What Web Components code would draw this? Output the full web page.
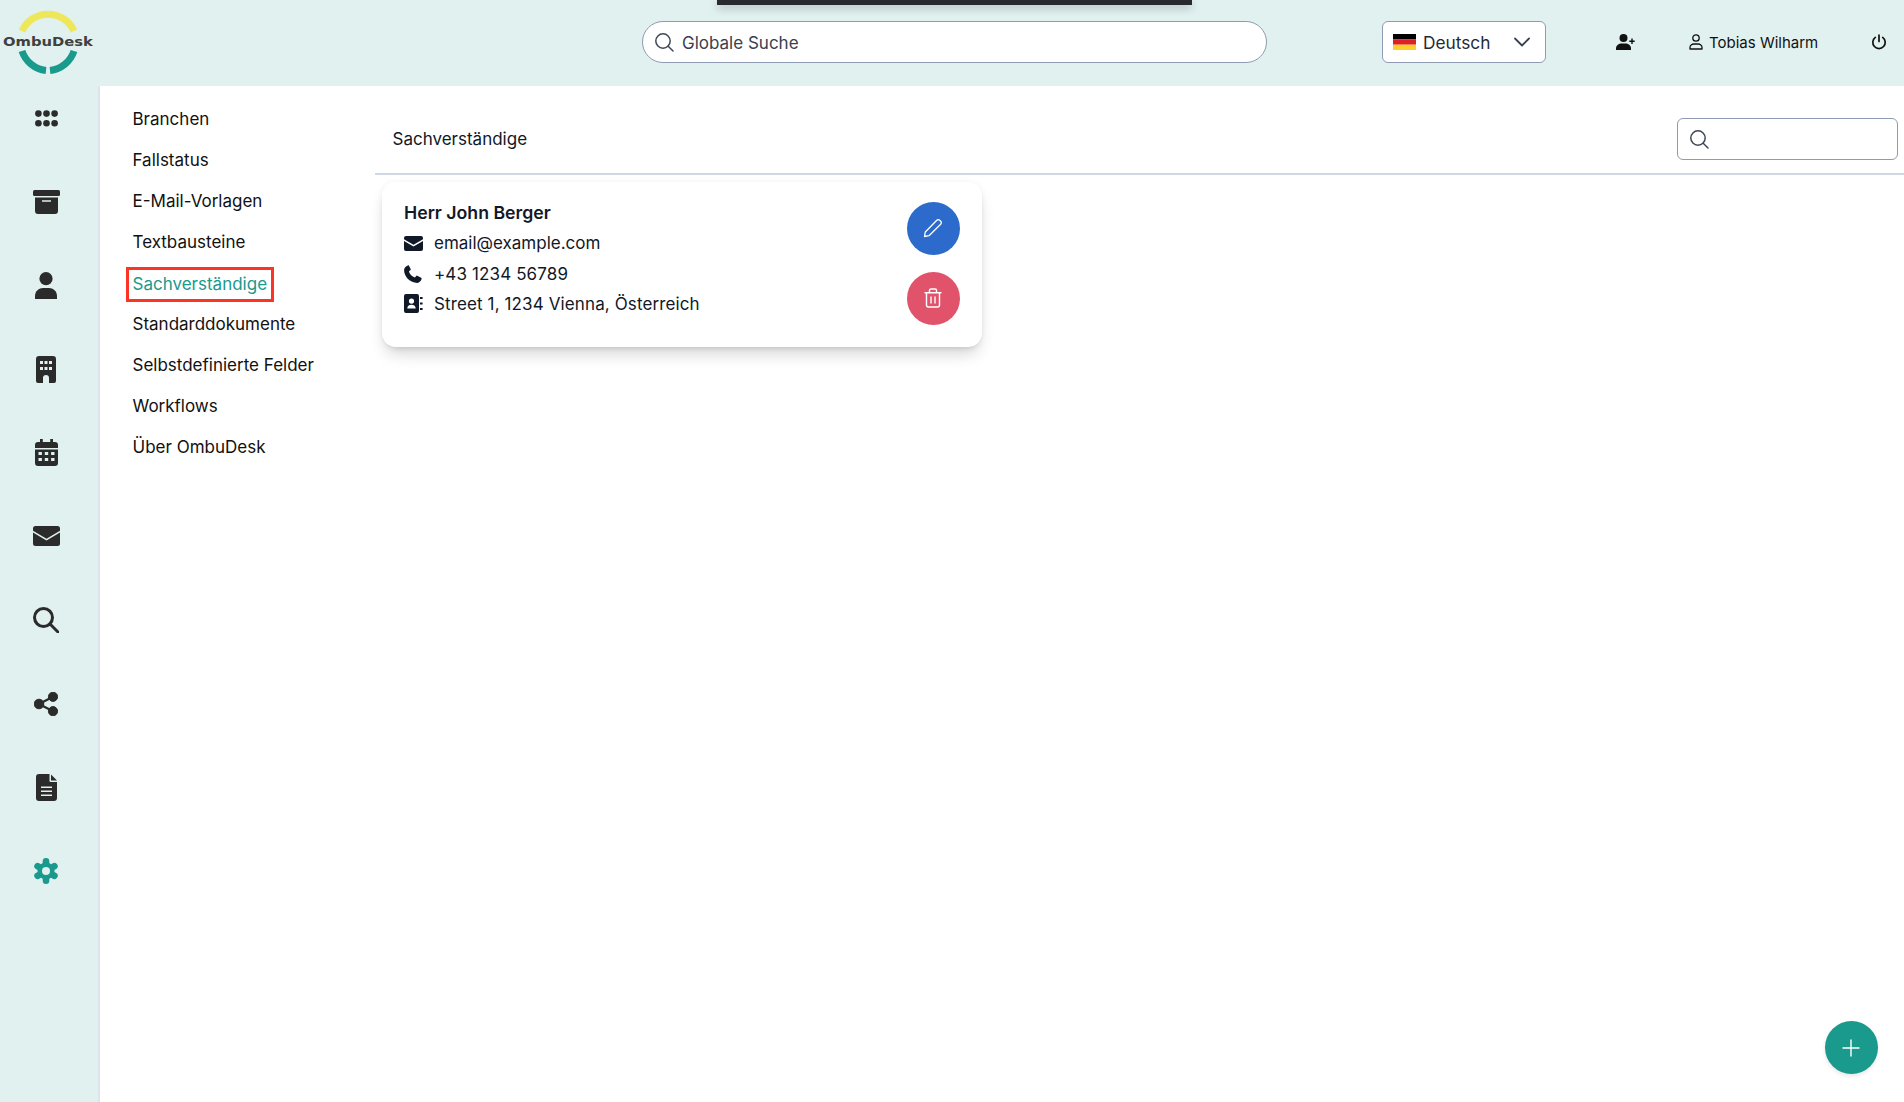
<!DOCTYPE html>
<html lang="de">
<head>
<meta charset="utf-8">
<title>OmbuDesk</title>
<style>
    html, body { margin: 0; padding: 0; background: #fff; }
    body { font-family: Inter, "Liberation Sans", sans-serif; font-size: 17px; color: #111827; }
</style>
</head>
<body>
<om-app></om-app>
<script>
// Alle Symbole an einem Ort, damit die Komponenten sie nur per Namen holen
const ICONS = {
    grid: `<svg viewBox="0 0 23 17" width="23" height="17" fill="currentColor"><circle cx="3.4" cy="3.6" r="3.3"/><circle cx="11.5" cy="3.6" r="3.3"/><circle cx="19.6" cy="3.6" r="3.3"/><circle cx="3.4" cy="13.2" r="3.3"/><circle cx="11.5" cy="13.2" r="3.3"/><circle cx="19.6" cy="13.2" r="3.3"/></svg>`,
    archive: `<svg viewBox="0 0 27 24" width="27" height="24" fill="currentColor"><rect x="0" y="0" width="27" height="6" rx="1.5"/><path fill-rule="evenodd" d="M2 7.5h23V21a3 3 0 0 1-3 3H5a3 3 0 0 1-3-3zM9 10.3v1.4h9v-1.4z"/></svg>`,
    person: `<svg viewBox="0 0 24 27" width="24" height="27" fill="currentColor"><circle cx="12" cy="6.7" r="6.6"/><path d="M1 27v-3c0-5 4-8 8-8h6c4 0 8 3 8 8v3z"/></svg>`,
    building: `<svg viewBox="0 0 20 27" width="20" height="27" fill="currentColor"><path fill-rule="evenodd" d="M3 0h14a3 3 0 0 1 3 3v22a2 2 0 0 1-2 2h-5v-5a3 3 0 0 0-6 0v5H2a2 2 0 0 1-2-2V3a3 3 0 0 1 3-3zM4 5v3h3V5zM8.5 5v3h3V5zM13 5v3h3V5zM4 11v3h3v-3zM8.5 11v3h3v-3zM13 11v3h3v-3z"/></svg>`,
    calendar: `<svg viewBox="0 0 23 27" width="23" height="27" fill="currentColor"><path d="M5 0.5a1.4 1.4 0 0 1 2.8 0V3h7.4V0.5a1.4 1.4 0 0 1 2.8 0V3h2a3 3 0 0 1 3 3v3H0V6a3 3 0 0 1 3-3h2z"/><path fill-rule="evenodd" d="M0 10.5h23V24a3 3 0 0 1-3 3H3a3 3 0 0 1-3-3zM3.5 13v3h3.4v-3zM9.8 13v3h3.4v-3zM16.1 13v3h3.4v-3zM3.5 19v3h3.4v-3zM9.8 19v3h3.4v-3zM16.1 19v3h3.4v-3z"/></svg>`,
    mail: `<svg viewBox="0 0 27 20" width="27" height="20" fill="currentColor"><path d="M2.5 0h22A2.5 2.5 0 0 1 27 2.5v2.3L13.5 12.8 0 4.8V2.5A2.5 2.5 0 0 1 2.5 0z"/><path d="M0 6.5l13.5 8 13.5-8V17.5a2.5 2.5 0 0 1-2.5 2.5h-22A2.5 2.5 0 0 1 0 17.5z"/></svg>`,
    search: `<svg viewBox="0 0 26 26" width="26" height="26" fill="none" stroke="currentColor" stroke-width="3"><circle cx="10.5" cy="10.5" r="9"/><path d="M17 17l8 8" stroke-linecap="round"/></svg>`,
    share: `<svg viewBox="0 0 24 24" width="24" height="24" fill="currentColor" stroke="currentColor"><circle cx="5" cy="12" r="4.8"/><circle cx="19" cy="4.8" r="4.6"/><circle cx="19" cy="19.2" r="4.6"/><path d="M5 12L19 4.8M5 12l14 7.2" stroke-width="2.4" fill="none"/></svg>`,
    doc: `<svg viewBox="0 0 21 27" width="21" height="27" fill="currentColor"><path fill-rule="evenodd" d="M3 0h10.500v7a1 1 0 0 0 1 1H21v16a3 3 0 0 1-3 3H3a3 3 0 0 1-3-3V3a3 3 0 0 1 3-3zM5 12.500v1.500h11v-1.500zM5 16.500v1.500h11v-1.500zM5 20.500v1.500h11v-1.500z"/><path d="M15 0.500l6 6h-6z"/></svg>`,
    gear: `<svg viewBox="0 0 26 26" width="26" height="26" fill="currentColor"><rect x="9.700" y="0" width="6.600" height="26" rx="3.200"/><rect x="9.700" y="0" width="6.600" height="26" rx="3.200" transform="rotate(60 13 13)"/><rect x="9.700" y="0" width="6.600" height="26" rx="3.200" transform="rotate(120 13 13)"/></svg>`,
    loupe: `<svg viewBox="0 0 20 20" width="20" height="20" fill="none" stroke="currentColor" stroke-width="1.500" stroke-linecap="round"><circle cx="9" cy="9" r="7.200"/><path d="M14.200 14.200L19 19"/></svg>`,
    chevron: `<svg viewBox="0 0 18 10" width="18" height="10" fill="none" stroke="currentColor" stroke-width="1.800" stroke-linecap="round" stroke-linejoin="round"><path d="M2 1.500l7 7 7-7"/></svg>`,
    flag: `<svg viewBox="0 0 23 16" width="23" height="16"><rect width="23" height="5.400" fill="#000"/><rect y="5.400" width="23" height="5.300" fill="#dd1f26"/><rect y="10.700" width="23" height="5.300" fill="#ffce2b"/></svg>`,
    userPlus: `<svg viewBox="0 0 20 16" width="20" height="16" fill="currentColor"><circle cx="7.500" cy="4" r="4"/><path d="M0 16v-1.500C0 11 3 9.500 5.500 9.500h4c2.500 0 5.500 1.500 5.500 5V16z"/><path d="M15.300 4.500h1.400v2h2v1.400h-2v2h-1.400v-2h-2V6.500h2z"/></svg>`,
    userLine: `<svg viewBox="0 0 14 16" width="14" height="16" fill="none" stroke="currentColor" stroke-width="1.300"><circle cx="7" cy="4" r="3.200"/><path d="M1 15v-1.500C1 11.500 2.800 10 5 10h4c2.200 0 4 1.500 4 3.500V15z" stroke-linejoin="round"/></svg>`,
    power: `<svg viewBox="0 0 16 16" width="16" height="16" fill="none" stroke="currentColor" stroke-width="1.700" stroke-linecap="round"><path d="M8 1v6.500"/><path d="M4.300 3.400a6.200 6.200 0 1 0 7.400 0"/></svg>`,
    envelope: `<svg viewBox="0 0 19 15" width="19" height="15" fill="currentColor"><path d="M2 0h15a2 2 0 0 1 2 2v1.200L9.500 8.800 0 3.200V2a2 2 0 0 1 2-2z"/><path d="M0 5l9.500 5.600L19 5v8a2 2 0 0 1-2 2H2a2 2 0 0 1-2-2z"/></svg>`,
    phone: `<svg viewBox="0 0 18 18" width="18" height="18" fill="currentColor"><path d="M4.700.300l2.200 4.300-2 2c.9 2.700 3.200 5 5.900 5.900l2-2 4.300 2.200c.5.300.7.900.5 1.400-.6 2-2.200 3.700-4.200 3.800C6.300 18 0 11.600.1 5c.1-2 1.700-3.700 3.700-4.500.3-.2.700-.300.900-.200z"/></svg>`,
    contacts: `<svg viewBox="0 0 19 19" width="19" height="19" fill="currentColor"><path fill-rule="evenodd" d="M2 0h11a2 2 0 0 1 2 2v15a2 2 0 0 1-2 2H2a2 2 0 0 1-2-2V2a2 2 0 0 1 2-2zM7.500 4.500a2.600 2.600 0 1 0 0 5.200 2.600 2.600 0 0 0 0-5.200zM3.300 14.500h8.400c0-2.500-1.500-3.800-4.200-3.800s-4.200 1.300-4.200 3.800z"/><path d="M16 3h2.600v2H16zM16 8.500h2.600v2H16zM16 14h2.600v2H16z"/></svg>`,
    pencil: `<svg viewBox="0 0 20 20" width="20" height="20" fill="none" stroke="currentColor" stroke-width="1.300" stroke-linejoin="round"><path d="M1.500 18.500l.8-4.500L13.800 2.300a2 2 0 0 1 2.900 0l1 1a2 2 0 0 1 0 2.900L6 17.700z"/></svg>`,
    trash: `<svg viewBox="0 0 18 20" width="18" height="20" fill="none" stroke="currentColor" stroke-width="1.400" stroke-linecap="round" stroke-linejoin="round"><path d="M1 4.800h16M5.500 4.500V2.300A1.300 1.300 0 0 1 6.800 1h4.400a1.300 1.300 0 0 1 1.300 1.300v2.200M2.500 5v12a2 2 0 0 0 2 2h9a2 2 0 0 0 2-2V5M7 9v6M11 9v6"/></svg>`,
    plus: `<svg viewBox="0 0 18 18" width="18" height="18" fill="none" stroke="currentColor" stroke-width="1.400" stroke-linecap="round"><path d="M9 1v16M1 9h16"/></svg>`
};

class OmLogo extends HTMLElement {
    connectedCallback() {
        this.attachShadow({mode: 'open'}).innerHTML = `
            <style>
                :host { display: block; position: relative; width: 96px; height: 86px; }
                svg { position: absolute; left: 16px; top: 10px; }
                span {
                    position: absolute; left: 3px; top: 33px;
                    font: 700 12.500px/17px "DejaVu Sans", sans-serif;
                    color: #404040; white-space: nowrap;
                    transform: scaleX(1.180); transform-origin: left center;
                }
            </style>
            <svg width="64" height="64" viewBox="0 0 64 64" fill="none" stroke-width="7">
                <path d="M6 21A28.500 28.500 0 0 1 58 21" stroke="#eee75a"/>
                <path d="M6 41A28.500 28.500 0 0 0 30 60.500" stroke="#1a998d"/>
                <path d="M34 60.500A28.500 28.500 0 0 0 58 41" stroke="#1a998d"/>
            </svg>
            <span>OmbuDesk</span>`;
    }
}
customElements.define('om-logo', OmLogo);

class OmLanguage extends HTMLElement {
    connectedCallback() {
        this.attachShadow({mode: 'open'}).innerHTML = `
            <style>
                :host {
                    display: flex; align-items: center; box-sizing: border-box;
                    width: 164px; height: 42px; padding: 0 14px 0 10px;
                    background: #fff; border: 1px solid #8f9bb3; border-radius: 6px;
                    color: #1f2937; font-size: 17.300px;
                }
                .t { margin-left: 7px; flex: 1; }
                .c { color: #374151; display: flex; }
                .f { display: flex; }
            </style>
            <span class="f">${ICONS.flag}</span><span class="t"><slot></slot></span><span class="c">${ICONS.chevron}</span>`;
    }
}
customElements.define('om-language', OmLanguage);

class OmSearch extends HTMLElement {
    connectedCallback() {
        this.attachShadow({mode: 'open'}).innerHTML = `
            <style>
                :host {
                    display: flex; align-items: center; gap: 8px; box-sizing: border-box;
                    background: #fff; border: 1px solid #8f9bb3;
                    padding: 0 12px 0 11px; color: #374151; font-size: 17px;
                }
                .i { display: flex; color: #3f4757; }
                .t { padding-top: 2px; }
            </style>
            <span class="i">${ICONS.loupe}</span><span class="t"><slot></slot></span>`;
    }
}
customElements.define('om-search', OmSearch);

class OmHeader extends HTMLElement {
    connectedCallback() {
        this.attachShadow({mode: 'open'}).innerHTML = `
            <style>
                :host {
                    display: flex; align-items: center; position: relative; box-sizing: border-box;
                    height: 86px; padding-bottom: 2px; background: #e0f1ef; color: #111;
                }
                om-logo { margin-bottom: -2px; }
                om-search { width: 625px; height: 42px; margin-left: 546px; border-radius: 21px; }
                om-language { margin-left: 115px; }
                .add { display: flex; margin-left: 70px; }
                .user { display: flex; align-items: center; gap: 6px; margin-left: 53px; font-size: 15px; }
                .user span { display: flex; }
                .off { display: flex; margin-left: 53px; }
                .bar {
                    position: absolute; left: 717px; top: 0; width: 475px; height: 5px;
                    background: #282a30; box-shadow: 0 3px 8px rgba(0,0,0,.25);
                }
            </style>
            <om-logo></om-logo>
            <om-search>Globale Suche</om-search>
            <om-language>Deutsch</om-language>
            <span class="add">${ICONS.userPlus}</span>
            <div class="user"><span>${ICONS.userLine}</span>Tobias Wilharm</div>
            <span class="off">${ICONS.power}</span>
            <div class="bar"></div>`;
    }
}
customElements.define('om-header', OmHeader);

class OmRail extends HTMLElement {
    connectedCallback() {
        const names = ['grid', 'archive', 'person', 'building', 'calendar', 'mail', 'search', 'share', 'doc', 'gear'];
        const items = names.map(n => `<a class="${n === 'gear' ? 'on' : ''}">${ICONS[n]}</a>`).join('');
        this.attachShadow({mode: 'open'}).innerHTML = `
            <style>
                :host {
                    display: flex; flex-direction: column; gap: 55.700px; box-sizing: border-box;
                    width: 100px; padding-top: 18px;
                    background: #e0f1ef; border-right: 2px solid #dfe3ec; color: #2b2b2b;
                }
                a { display: flex; height: 28px; align-items: center; justify-content: center; padding-right: 6px; box-sizing: content-box; }
                .on { color: #1a998d; }
            </style>
            ${items}`;
        const gear = this.shadowRoot.querySelector('.on svg');
        gear.innerHTML += '<circle cx="13" cy="13" r="8.500" fill="#1a998d"/><circle cx="13" cy="13" r="4" fill="#e0f1ef"/>';
    }
}
customElements.define('om-rail', OmRail);

class OmNavItem extends HTMLElement {
    connectedCallback() {
        this.attachShadow({mode: 'open'}).innerHTML = `
            <style>
                :host { display: block; height: 41px; line-height: 41px; font-size: 17px; color: #111; white-space: nowrap; }
                :host([active]) { color: #1a998d; }
                span { display: inline-block; }
                :host([active]) span {
                    line-height: 29px; margin-left: -3.500px; padding: 0 3.500px;
                    outline: 3px solid #fb3426; outline-offset: 0;
                    vertical-align: middle;
                }
            </style>
            <span><slot></slot></span>`;
    }
}
customElements.define('om-nav-item', OmNavItem);

class OmSettingsNav extends HTMLElement {
    connectedCallback() {
        this.attachShadow({mode: 'open'}).innerHTML = `
            <style>
                :host { display: block; width: 275px; box-sizing: border-box; padding: 13px 0 0 32.500px; }
            </style>
            <slot></slot>`;
    }
}
customElements.define('om-settings-nav', OmSettingsNav);

class OmRoundButton extends HTMLElement {
    connectedCallback() {
        this.attachShadow({mode: 'open'}).innerHTML = `
            <style>
                :host {
                    display: flex; align-items: center; justify-content: center;
                    width: 53px; height: 53px; border-radius: 50%; color: #fff;
                    background: var(--bg, #1a998d);
                }
                span { display: flex; margin-left: -1px; }
            </style>
            <span>${ICONS[this.getAttribute('icon')]}</span>`;
    }
}
customElements.define('om-round-button', OmRoundButton);

class OmExpertCard extends HTMLElement {
    connectedCallback() {
        const nom = this.getAttribute('name');
        this.attachShadow({mode: 'open'}).innerHTML = `
            <style>
                :host {
                    display: flex; justify-content: space-between; box-sizing: border-box;
                    width: 600px; height: 165px; padding: 16.400px 22px 0 22px;
                    background: #fff; border-radius: 14px;
                    box-shadow: 0 10px 15px -3px rgba(0,0,0,.16), 0 4px 6px -4px rgba(0,0,0,.12), 0 0 6px rgba(0,0,0,.05);
                }
                h2 { margin: 0; font-size: 17.700px; line-height: 30px; font-weight: 600; color: #111827; }
                .row { display: flex; align-items: center; height: 30.200px; font-size: 17px; color: #111827; }
                .wide { letter-spacing: .12px; }
                .ic { display: flex; width: 30px; }
                .btns { display: flex; flex-direction: column; gap: 17px; margin-top: 3.600px; }
                om-round-button.edit { --bg: #2c6bcb; }
                om-round-button.del { --bg: #e1536b; }
            </style>
            <div>
                <h2>${nom}</h2>
                <div class="row"><span class="ic">${ICONS.envelope}</span>${this.getAttribute('email')}</div>
                <div class="row wide"><span class="ic">${ICONS.phone}</span>${this.getAttribute('phone')}</div>
                <div class="row wide"><span class="ic">${ICONS.contacts}</span>${this.getAttribute('address')}</div>
            </div>
            <div class="btns">
                <om-round-button class="edit" icon="pencil"></om-round-button>
                <om-round-button class="del" icon="trash"></om-round-button>
            </div>`;
    }
}
customElements.define('om-expert-card', OmExpertCard);

class OmMain extends HTMLElement {
    connectedCallback() {
        this.attachShadow({mode: 'open'}).innerHTML = `
            <style>
                :host { display: block; flex: 1; position: relative; }
                .top {
                    display: flex; align-items: center; justify-content: space-between;
                    box-sizing: border-box; height: 89px; padding: 19px 6px 0 17.500px;
                    border-bottom: 2px solid #cfd8e3; color: #111827; font-size: 17px;
                }
                om-search { width: 221px; height: 42px; border-radius: 6px; }
                .cards { padding: 7px 0 0 7px; }
                .fab { position: absolute; left: 1450px; top: 935px; }
                .fab om-round-button { box-shadow: 0 2px 4px rgba(0,0,0,.1); }
            </style>
            <div class="top"><span>Sachverständige</span><om-search></om-search></div>
            <div class="cards"><slot></slot></div>
            <div class="fab"><om-round-button icon="plus"></om-round-button></div>`;
    }
}
customElements.define('om-main', OmMain);

class OmApp extends HTMLElement {
    connectedCallback() {
        this.attachShadow({mode: 'open'}).innerHTML = `
            <style>
                :host { display: flex; flex-direction: column; width: 1904px; height: 1102px; overflow: hidden; }
                .body { display: flex; flex: 1; }
            </style>
            <om-header></om-header>
            <div class="body">
                <om-rail></om-rail>
                <om-settings-nav>
                    <om-nav-item>Branchen</om-nav-item>
                    <om-nav-item>Fallstatus</om-nav-item>
                    <om-nav-item>E-Mail-Vorlagen</om-nav-item>
                    <om-nav-item>Textbausteine</om-nav-item>
                    <om-nav-item active>Sachverständige</om-nav-item>
                    <om-nav-item>Standarddokumente</om-nav-item>
                    <om-nav-item>Selbstdefinierte Felder</om-nav-item>
                    <om-nav-item>Workflows</om-nav-item>
                    <om-nav-item>Über OmbuDesk</om-nav-item>
                </om-settings-nav>
                <om-main>
                    <om-expert-card name="Herr John Berger" email="email@example.com" phone="+43 1234 56789" address="Street 1, 1234 Vienna, Österreich"></om-expert-card>
                </om-main>
            </div>`;
    }
}
customElements.define('om-app', OmApp);
</script>
</body>
</html>
